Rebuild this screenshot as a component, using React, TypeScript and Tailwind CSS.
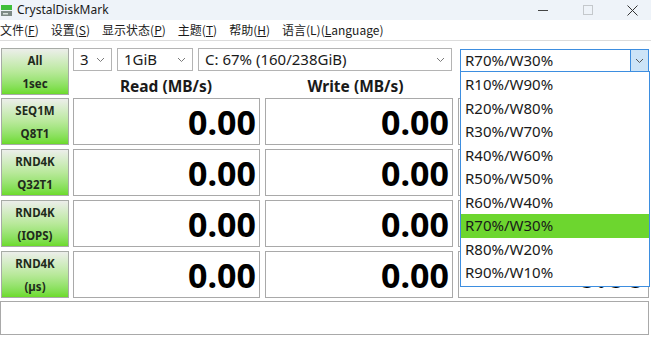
import React from "react";

const rows = [
  ["SEQ1M", "Q8T1"],
  ["RND4K", "Q32T1"],
  ["RND4K", "(IOPS)"],
  ["RND4K", "(µs)"],
];

const mixes = [
  "R10%/W90%",
  "R20%/W80%",
  "R30%/W70%",
  "R40%/W60%",
  "R50%/W50%",
  "R60%/W40%",
  "R70%/W30%",
  "R80%/W20%",
  "R90%/W10%",
];

const menus: [string, string][] = [
  ["文件", "F"],
  ["设置", "S"],
  ["显示状态", "P"],
  ["主题", "T"],
  ["帮助", "H"],
];

function Chevron({ className = "" }: { className?: string }) {
  return (
    <svg width="9" height="6" viewBox="0 0 9 6" className={className}>
      <path d="M1 1l3.5 3.5L8 1" fill="none" stroke="currentColor" strokeWidth="1" />
    </svg>
  );
}

function Combo({ w, text }: { w: string; text: string }) {
  return (
    <div className={`${w} h-[23px] border border-[#b4b4b4] bg-white flex items-center pl-[6px] pr-[6px]`}>
      <span className="flex-1 text-[15px] text-[#1a1a1a] leading-none">{text}</span>
      <Chevron className="text-[#7a7a7a]" />
    </div>
  );
}

function TestButton({ top, bottom }: { top: string; bottom: string }) {
  return (
    <div className="w-[68px] h-[47px] border border-[#a7aba6] bg-gradient-to-b from-[#eceeea] via-[#b9e99b] to-[#6cdb28] flex flex-col items-center justify-center text-[11.5px] font-bold text-[#1f2b1c] leading-[23px]">
      <span>{top}</span>
      <span>{bottom}</span>
    </div>
  );
}

function Value({ w }: { w: string }) {
  return (
    <div className={`${w} h-[47px] border border-[#a9a9a9] bg-white flex items-center justify-end pr-[3px]`}>
      <span className="text-[34px] font-bold text-black leading-none">0.00</span>
    </div>
  );
}

export default function App() {
  return (
    <div
      className="relative w-[651px] h-[363px] overflow-hidden bg-white"
      style={{ fontFamily: '"Noto Sans", "Noto Sans CJK SC", sans-serif' }}
    >
      {/* title bar */}
      <div className="h-[20px] bg-[#eef3f9] flex items-center">
        <svg width="11" height="13" viewBox="0 0 11 13" className="ml-[1px] mr-[5px]">
          <rect x="0" y="1" width="11" height="5" fill="#3fbf3a" />
          <rect x="0" y="7" width="11" height="5" fill="#7d8a86" />
          <rect x="2" y="9" width="5" height="1.5" fill="#d9e3de" />
        </svg>
        <span className="text-[12px] text-[#1a1a1a]">CrystalDiskMark</span>
        <div className="flex-1" />
        <div className="w-[10px] h-[1px] bg-[#444] mr-[35px]" />
        <div className="w-[10px] h-[10px] border border-[#c4c8cc] mr-[34px]" />
        <svg width="11" height="11" viewBox="0 0 11 11" className="mr-[13px]">
          <path d="M0.5 0.5l10 10M10.5 0.5l-10 10" stroke="#333" strokeWidth="1" />
        </svg>
      </div>

      {/* menu bar */}
      <div className="h-[21px] bg-white flex items-center text-[12px] text-[#1a1a1a] border-b border-[#dcdcdc] gap-[12px]" style={{ fontFamily: '"Noto Sans CJK SC", sans-serif' }}>
        {menus.map(([label, key]) => (
          <span key={key}>
            {label}(<u>{key}</u>)
          </span>
        ))}
        <span>
          语言(L)(<u>L</u>anguage)
        </span>
      </div>

      {/* main */}
      <div className="pt-[7px] pl-[1px]">
        <div className="flex">
          <div className="w-[68px] h-[47px] border border-[#a7aba6] bg-gradient-to-b from-[#eceeea] via-[#b9e99b] to-[#6cdb28] flex flex-col items-center justify-center text-[11.5px] font-bold text-[#1f2b1c] leading-[23px]">
            <span>All</span>
            <span>1sec</span>
          </div>
          <div className="ml-[4px] flex flex-col">
            <div className="flex gap-[5px]">
              <Combo w="w-[39px]" text="3" />
              <Combo w="w-[76px]" text="1GiB" />
              <Combo w="w-[254px]" text="C: 67% (160/238GiB)" />
            </div>
            <div className="flex mt-[6px] text-[15.5px] font-bold text-[#1a1a1a] leading-[18px]">
              <div className="w-[186px] text-center">Read (MB/s)</div>
              <div className="w-[193px] text-center">Write (MB/s)</div>
            </div>
          </div>
        </div>

        <div className="flex flex-col gap-[4px] mt-[3px]">
          {rows.map(([a, b], i) => (
            <div key={i} className="flex">
              <TestButton top={a} bottom={b} />
              <div className="ml-[4px]">
                <Value w="w-[187px]" />
              </div>
              <div className="ml-[5px]">
                <Value w="w-[188px]" />
              </div>
              <div className="ml-[5px]">
                <Value w="w-[191px]" />
              </div>
            </div>
          ))}
        </div>

        <div className="mt-[3px] -ml-[1px] w-[649px] h-[34px] border border-[#a9a9a9] bg-white" />
      </div>

      {/* mix combo (open) */}
      <div className="absolute left-[460px] top-[49px] w-[189px] h-[23px] border border-[#3d8ee0] bg-white flex">
        <span className="flex-1 pl-[4px] text-[15px] text-[#1a1a1a] leading-[21px]">R70%/W30%</span>
        <div className="w-[18px] bg-[#cce4f7] border-l border-[#3d8ee0] flex items-center justify-center">
          <Chevron className="text-[#555]" />
        </div>
      </div>
      <div className="absolute left-[460px] top-[71px] w-[190px] border border-[#3d8ee0] bg-white py-[1px]">
        {mixes.map((m) => (
          <div
            key={m}
            className={`h-[23.5px] pl-[4px] text-[15px] text-[#1a1a1a] leading-[23.5px] ${m === "R70%/W30%" ? "bg-[#6dd62f]" : ""}`}
          >
            {m}
          </div>
        ))}
      </div>
    </div>
  );
}
